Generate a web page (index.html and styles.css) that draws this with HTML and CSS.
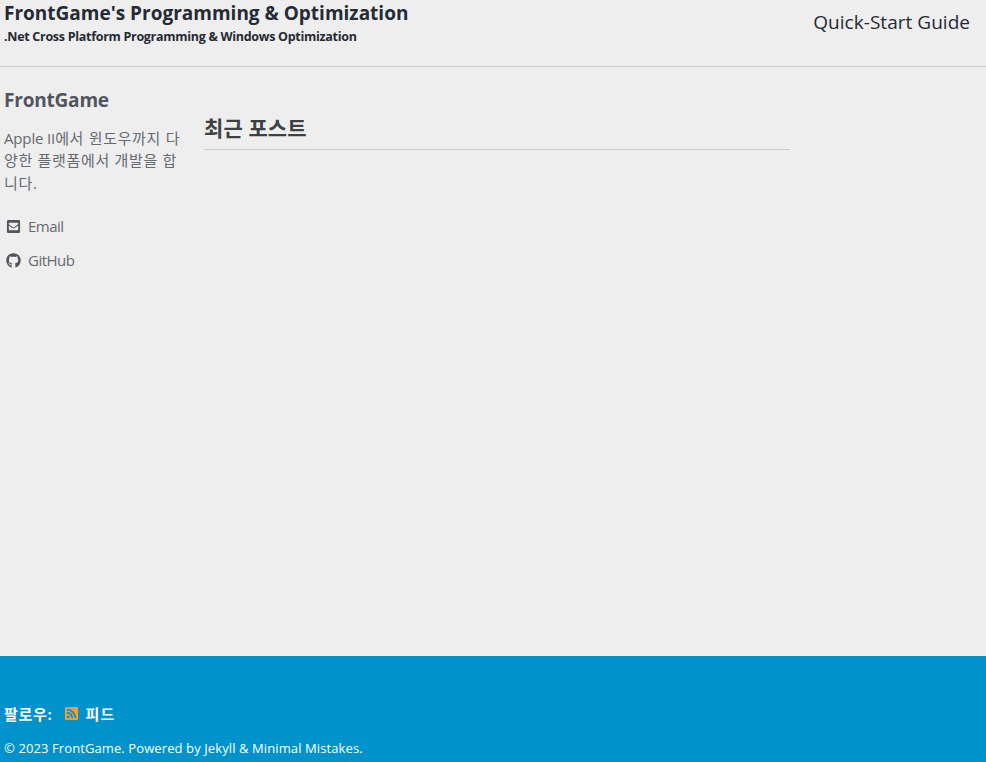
FILE: index.html
```html
<!DOCTYPE html>
<html lang="ko">
<head>
<meta charset="utf-8">
<title>FrontGame's Programming &amp; Optimization</title>
<link rel="stylesheet" href="styles.css">
</head>
<body>
<header class="masthead">
  <a class="site-title"><span class="site-name">FrontGame's Programming &amp; Optimization</span><span class="site-subtitle">.Net Cross Platform Programming &amp; Windows Optimization</span></a>
  <nav><a class="nav-link">Quick-Start Guide</a></nav>
</header>
<div class="main">
  <aside class="sidebar">
    <h3 class="author-name">FrontGame</h3>
    <p class="author-bio"><span class="latin">Apple II</span>에서 윈도우까지 다<br>양한 플랫폼에서 개발을 합<br>니다.</p>
    <ul class="author-links">
      <li><svg class="icon" viewBox="0 0 448 512"><path d="M400 32H48C21.490 32 0 53.490 0 80v352c0 26.510 21.490 48 48 48h352c26.510 0 48-21.490 48-48V80c0-26.510-21.490-48-48-48zM178.117 262.104C87.429 196.287 88.353 196.121 64 177.167V152c0-13.255 10.745-24 24-24h272c13.255 0 24 10.745 24 24v25.167c-24.371 18.969-23.434 19.124-114.117 84.938-10.500 7.655-31.392 26.120-45.883 25.894-14.503.218-35.367-18.227-45.883-25.895zM384 217.775V360c0 13.255-10.745 24-24 24H88c-13.255 0-24-10.745-24-24V217.775c13.958 10.794 33.329 25.236 95.303 70.214 14.162 10.341 37.975 32.145 64.694 32.010 26.887.134 51.037-22.041 64.720-32.025 61.958-44.964 81.325-59.406 95.283-70.199z"/></svg><span class="email">Email</span></li>
      <li><svg class="icon" viewBox="0 0 496 512"><path d="M165.900 397.400c0 2-2.300 3.600-5.200 3.600-3.300.3-5.600-1.300-5.600-3.600 0-2 2.300-3.600 5.200-3.600 3-.3 5.600 1.300 5.600 3.600zM244.800 8C106.100 8 0 113.300 0 252c0 110.900 69.800 205.800 169.500 239.200 12.800 2.300 17.300-5.600 17.300-12.100 0-6.200-.3-40.400-.3-61.400 0 0-70 15-84.700-29.800 0 0-11.400-29.100-27.800-36.600 0 0-22.900-15.700 1.600-15.400 0 0 24.900 2 38.600 25.800 21.900 38.600 58.600 27.500 72.900 20.900 2.300-16 8.800-27.100 16-33.700-55.900-6.200-112.300-14.300-112.300-110.500 0-27.500 7.600-41.300 23.600-58.900-2.600-6.500-11.100-33.300 2.600-67.900 20.900-6.500 69 27 69 27 20-5.600 41.500-8.500 62.800-8.500s42.800 2.900 62.800 8.500c0 0 48.100-33.600 69-27 13.700 34.700 5.200 61.400 2.600 67.900 16 17.700 25.800 31.500 25.800 58.900 0 96.500-58.900 104.200-114.800 110.500 9.200 7.900 17 22.900 17 46.400 0 33.700-.3 75.400-.3 83.600 0 6.500 4.600 14.400 17.300 12.100C428.200 457.800 496 362.900 496 252 496 113.300 383.500 8 244.800 8z"/></svg><span class="github">GitHub</span></li>
    </ul>
  </aside>
  <main class="content"><h2 class="recent">최근 포스트</h2></main>
</div>
<footer class="footer">
  <div class="follow"><span class="follow-label">팔로우:</span><svg class="icon rss" viewBox="0 0 448 512"><path d="M400 32H48C21.490 32 0 53.490 0 80v352c0 26.510 21.490 48 48 48h352c26.510 0 48-21.490 48-48V80c0-26.510-21.490-48-48-48zM112 416c-26.510 0-48-21.490-48-48s21.490-48 48-48 48 21.490 48 48-21.490 48-48 48zm157.533 0h-34.335c-6.011 0-11.051-4.636-11.442-10.634-5.214-80.050-69.243-143.920-149.123-149.123-5.997-.390-10.633-5.431-10.633-11.441v-34.335c0-6.535 5.468-11.777 11.994-11.425 110.546 5.974 198.997 94.536 204.964 204.964.352 6.526-4.890 11.994-11.425 11.994zm103.027 0h-34.334c-6.161 0-11.175-4.882-11.427-11.038-5.598-136.535-115.204-246.161-251.760-251.760C68.882 152.949 64 147.935 64 141.774V107.440c0-6.454 5.338-11.664 11.787-11.432 167.830 6.025 302.210 141.191 308.205 308.205.232 6.449-4.978 11.787-11.432 11.787z"/></svg><span class="feed">피드</span></div>
  <div class="copyright">© 2023 FrontGame. Powered by Jekyll &amp; Minimal Mistakes.</div>
</footer>
</body>
</html>
```
FILE: styles.css
```css
* { box-sizing: border-box; }
body {
  margin: 0;
  min-height: 762px;
  display: flex;
  flex-direction: column;
  background: #eee;
  color: #51555d;
  font-family: "Open Sans", "Noto Sans CJK KR", sans-serif;
  overflow: hidden;
}
.masthead {
  height: 67px;
  border-bottom: 1px solid #ccc;
  padding: 0 16px 0 4px;
  display: flex;
  justify-content: space-between;
  color: #252a34;
}
.site-title { display: flex; flex-direction: column; font-weight: 700; white-space: nowrap; }
.site-name { font-size: 19px; line-height: 26px; }
.site-subtitle { font-size: 12.5px; line-height: 21px; letter-spacing: -0.29px; }
.nav-link { display: block; font-size: 19px; line-height: 44px; letter-spacing: 0.03px; white-space: nowrap; }
.main { flex: 1; display: flex; }
.sidebar { width: 204px; padding: 20px 0 0 4px; }
.author-name { margin: 0; font-size: 19px; line-height: 26px; letter-spacing: -0.2px; }
.author-bio { margin: 13.5px 0 0; font-size: 15px; line-height: 22.5px; letter-spacing: 0.68px; white-space: nowrap; color: #666a71; }
.latin { letter-spacing: -0.15px; }
.author-links { list-style: none; margin: 16.5px 0 0; padding: 0; font-size: 15px; letter-spacing: -0.5px; color: #666a71; }
.author-links li { display: flex; align-items: center; height: 34px; }
.author-links span { margin-top: -3px; }
.icon { width: 19px; height: 15px; margin: -2px 5px 0 0; fill: #51555d; }
.content { width: 586px; padding-top: 46px; }
.recent { margin: 0; height: 37px; border-bottom: 1px solid #ccc; font-size: 21px; line-height: 31px; letter-spacing: 0.1px; color: #3d4144; }
.footer { height: 106px; padding: 45px 4px 0; background: #0092ca; color: #fff; }
.follow { display: flex; align-items: center; height: 24px; font-size: 15px; font-weight: 700; letter-spacing: 0.7px; }
.rss { margin: 0 4px 0 10px; fill: #fa9b39; }
.feed { letter-spacing: 1.2px; }
.copyright { margin-top: 13px; font-size: 13px; line-height: 20px; letter-spacing: 0.1px; white-space: nowrap; }
```
